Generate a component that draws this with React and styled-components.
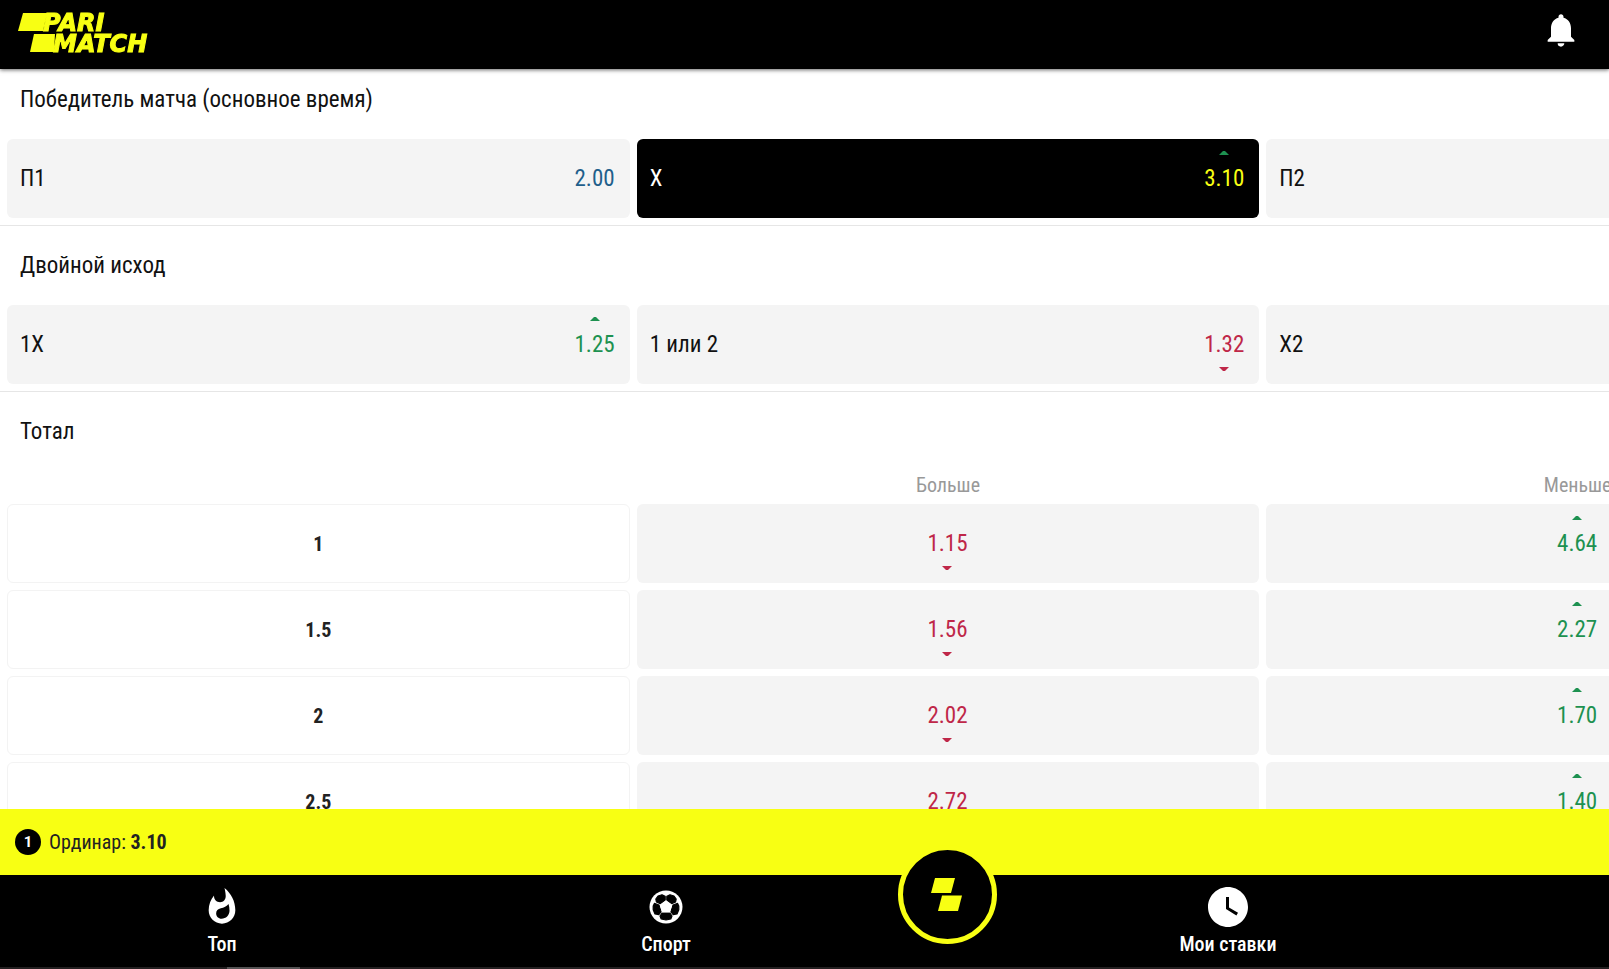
import React from "react";
import { MdNotifications, MdWatchLater, MdWhatshot } from "react-icons/md";
import styled, { createGlobalStyle } from "styled-components";

const YELLOW = "#f8ff13";
const GREEN = "#1d9150";
const RED = "#bf2748";
const BLUE = "#1f5f8b";

const GlobalStyle = createGlobalStyle`
  * {
    box-sizing: border-box;
  }
  body {
    margin: 0;
    background-color: #ffffff;
    color: #111111;
    font-family: "Roboto Condensed", "Liberation Sans Narrow", Roboto, sans-serif;
  }
  button {
    border: 0;
    padding: 0;
    margin: 0;
    background: none;
    color: inherit;
    font: inherit;
    cursor: pointer;
  }
`;

const Page = styled.div`
  height: 100vh;
  overflow: hidden;
`;

const Header = styled.header`
  position: fixed;
  top: 0;
  left: 0;
  right: 0;
  z-index: 2;
  display: flex;
  justify-content: space-between;
  align-items: flex-start;
  height: 69px;
  padding: 10px 28px 0 16px;
  background-color: #000000;
  box-shadow: 0 1px 4px rgba(0, 0, 0, 0.6);
`;

const LogoLink = styled.a`
  display: block;
  height: 46px;

  svg {
    overflow: visible;
  }

  text {
    font-family: "DejaVu Sans", Inter, sans-serif;
    font-size: 24px;
    font-weight: 700;
    font-style: italic;
  }
`;

const BellButton = styled.button`
  display: flex;
  color: #ffffff;
`;

const Board = styled.main`
  width: calc(100% + 287px);
  padding-top: 60px;
`;

const Market = styled.section`
  border-bottom: 1px solid #e6e6e6;
`;

const MarketTitle = styled.h2`
  margin: 0;
  padding: 0 20px;
  font-size: 23px;
  font-weight: 400;
  line-height: 79px;
`;

const Outcomes = styled.div`
  display: grid;
  grid-template-columns: repeat(3, 1fr);
  gap: 7px;
  padding: 0 7px 7px;
`;

const Outcome = styled.button`
  display: flex;
  justify-content: ${(props) => (props.$centered ? "center" : "space-between")};
  align-items: center;
  width: 100%;
  height: 79px;
  padding: 0 ${(props) => (props.$centered ? "14px" : "15px")} 0 13px;
  border-radius: 6px;
  background-color: ${(props) => (props.$selected ? "#000000" : "#f4f4f4")};
  color: ${(props) => (props.$selected ? "#ffffff" : "inherit")};
  font-size: 23px;
`;

const Odds = styled.span`
  position: relative;
  color: ${(props) => props.$color};
`;

const Arrow = styled.svg`
  position: absolute;
  left: 50%;
  ${(props) => (props.$up ? "top: -14px;" : "bottom: -14px;")}
  width: 10px;
  height: 5px;
  margin-left: -5px;
  fill: ${(props) => (props.$up ? GREEN : RED)};
`;

const Totals = styled.table`
  width: 100%;
  table-layout: fixed;
  border-collapse: separate;
  border-spacing: 7px;
`;

const ColumnHead = styled.th`
  height: 19px;
  padding: 0;
  vertical-align: top;
  color: #999999;
  font-size: 20px;
  font-weight: 400;
  line-height: 14px;
`;

const Line = styled.th`
  height: 79px;
  padding: 0;
  border: 1px solid #f3f3f3;
  border-radius: 6px;
  color: #222222;
  font-size: 20px;
  font-weight: 700;
`;

const Cell = styled.td`
  padding: 0;
`;

const Footer = styled.footer`
  position: fixed;
  left: 0;
  right: 0;
  bottom: 0;
  z-index: 2;
  overflow: hidden;
  background-color: #000000;
`;

const BetSlip = styled.button`
  display: flex;
  align-items: center;
  gap: 8px;
  width: 100%;
  height: 66px;
  padding: 0 15px;
  background-color: ${YELLOW};
  color: #222222;
  font-size: 20px;
`;

const BetCount = styled.span`
  width: 26px;
  height: 26px;
  border-radius: 50%;
  background-color: #000000;
  color: #ffffff;
  font-family: Roboto, sans-serif;
  font-size: 15px;
  font-weight: 700;
  line-height: 26px;
  text-align: center;
`;

const Sum = styled.span`
  font-weight: 700;
`;

const Nav = styled.nav`
  display: grid;
  grid-template-columns: 1fr 1fr 118px 1fr 1fr;
  width: calc(100% + 285px);
  height: 92px;
`;

const NavItem = styled.a`
  display: flex;
  flex-direction: column;
  align-items: center;
  padding-top: 8px;
  color: #ffffff;
  font-size: 20px;
  font-weight: 500;
  line-height: 26px;
  text-decoration: none;
`;

const NavIcon = styled.span`
  display: flex;
  align-items: center;
  justify-content: center;
  height: 48px;
`;

const HomeButton = styled.button`
  justify-self: center;
  display: flex;
  align-items: center;
  justify-content: center;
  width: 99px;
  height: 99px;
  margin-top: -30px;
  border: 5px solid ${YELLOW};
  border-radius: 50%;
  background-color: #000000;
`;

const ScrollTrack = styled.div`
  height: 2px;
  padding-left: 227px;
  background-color: #231f20;
`;

const ScrollThumb = styled.div`
  width: 73px;
  height: 2px;
  background-color: #555354;
`;

const Logo = () => (
  <svg width="136" height="46" viewBox="0 0 136 46" fill={YELLOW}>
    <path d="M7 3h24l-4 18H2z" />
    <path d="M18 24h21l-1 18H14z" />
    <path d="M29 3h10l-1 4h-8l-2 6z" />
    <text x="27" y="21" stroke={YELLOW}>
      PARI
    </text>
    <text x="37" y="42" stroke={YELLOW}>
      MATCH
    </text>
  </svg>
);

const Ball = () => (
  <svg width="34" height="34" viewBox="0 0 34 34">
    <circle cx="17" cy="17" r="16.5" fill="#fff" />
    <g fill="#000" stroke="#000" strokeWidth="1.2" strokeLinejoin="round">
      <path d="M9 6 13 4.8 16.2 6.4V10L11.3 13.6 7.4 12 6.8 9z" />
      <path d="M25 6 21 4.8 17.8 6.4V10L22.7 13.6 26.6 12 27.2 9z" />
      <path d="M5.4 13.4 10 15 12.2 21.6 9.8 24.6 6 24 4.2 19.8 4.2 16z" />
      <path d="M28.6 13.4 24 15 21.8 21.6 24.2 24.6 28 24 29.8 19.8 29.8 16z" />
      <path d="M13.2 22.8H20.8L23 26 21.8 29 17 30 12.2 29 11 26z" />
    </g>
    <path d="M17 10.6 23.2 15.2 21 22.4H13L10.8 15.2z" fill="#fff" />
  </svg>
);

const Mark = () => (
  <svg width="32" height="34" viewBox="0 0 32 34" fill={YELLOW}>
    <path d="M4 0h20l-4 15H0z" />
    <path d="M11 17.5h20l-4 15.5H7z" />
  </svg>
);

const drawOdds = (odds, trend, selected) => {
  let color = BLUE;
  if (trend === "up") color = GREEN;
  if (trend === "down") color = RED;
  if (selected) color = YELLOW;
  return (
    <Odds $color={color}>
      {odds}
      {trend && (
        <Arrow $up={trend === "up"} viewBox="0 0 10 5" aria-hidden="true">
          <path d={trend === "up" ? "M0 4 4 0h2l4 4z" : "M0 0h10L6 4H4z"} />
        </Arrow>
      )}
    </Odds>
  );
};

const markets = [
  {
    title: "Победитель матча (основное время)",
    outcomes: [
      { label: "П1", odds: "2.00" },
      { label: "X", odds: "3.10", trend: "up", selected: true },
      { label: "П2" },
    ],
  },
  {
    title: "Двойной исход",
    outcomes: [
      { label: "1X", odds: "1.25", trend: "up" },
      { label: "1 или 2", odds: "1.32", trend: "down" },
      { label: "X2" },
    ],
  },
];

const totals = [
  { line: "1", over: "1.15", under: "4.64" },
  { line: "1.5", over: "1.56", under: "2.27" },
  { line: "2", over: "2.02", under: "1.70" },
  { line: "2.5", over: "2.72", under: "1.40" },
];

export default function App() {
  return (
    <Page>
      <GlobalStyle />
      <Header>
        <LogoLink href="#" aria-label="Parimatch">
          <Logo />
        </LogoLink>
        <BellButton aria-label="Уведомления">
          <MdNotifications size={40} />
        </BellButton>
      </Header>

      <Board>
        {markets.map((market) => (
          <Market key={market.title}>
            <MarketTitle>{market.title}</MarketTitle>
            <Outcomes>
              {market.outcomes.map((o) => (
                <Outcome key={o.label} $selected={o.selected}>
                  <span>{o.label}</span>
                  {o.odds && drawOdds(o.odds, o.trend, o.selected)}
                </Outcome>
              ))}
            </Outcomes>
          </Market>
        ))}
        <Market>
          <MarketTitle>Тотал</MarketTitle>
          <Totals>
            <thead>
              <tr>
                <td />
                <ColumnHead scope="col">Больше</ColumnHead>
                <ColumnHead scope="col">Меньше</ColumnHead>
              </tr>
            </thead>
            <tbody>
              {totals.map((t) => (
                <tr key={t.line}>
                  <Line scope="row">{t.line}</Line>
                  <Cell>
                    <Outcome $centered>{drawOdds(t.over, "down")}</Outcome>
                  </Cell>
                  <Cell>
                    <Outcome $centered>{drawOdds(t.under, "up")}</Outcome>
                  </Cell>
                </tr>
              ))}
            </tbody>
          </Totals>
        </Market>
      </Board>

      <Footer>
        <BetSlip>
          <BetCount>1</BetCount>
          <span>
            Ординар: <Sum>3.10</Sum>
          </span>
        </BetSlip>
        <Nav>
          <NavItem href="#">
            <NavIcon>
              <MdWhatshot size={40} />
            </NavIcon>
            Топ
          </NavItem>
          <NavItem href="#">
            <NavIcon>
              <Ball />
            </NavIcon>
            Спорт
          </NavItem>
          <HomeButton aria-label="Главная">
            <Mark />
          </HomeButton>
          <NavItem href="#">
            <NavIcon>
              <MdWatchLater size={48} />
            </NavIcon>
            Мои ставки
          </NavItem>
        </Nav>
        <ScrollTrack>
          <ScrollThumb />
        </ScrollTrack>
      </Footer>
    </Page>
  );
}
